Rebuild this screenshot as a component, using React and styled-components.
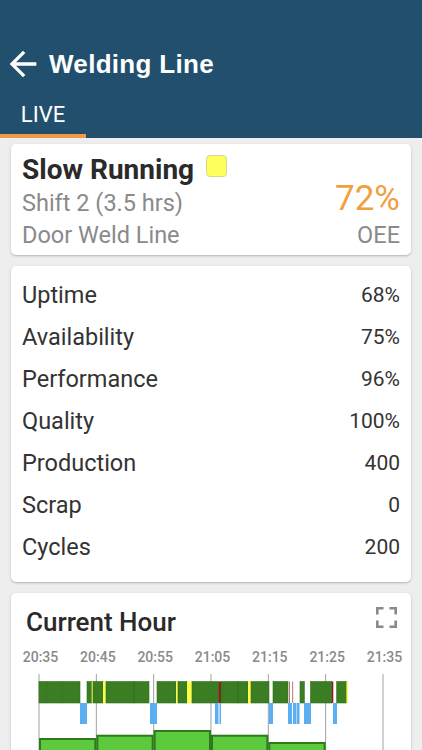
import React from "react";
import styled, { createGlobalStyle } from "styled-components";

const GlobalStyle = createGlobalStyle`
  html, body { margin: 0; padding: 0; background: #eeeeee; }
  body { font-family: Roboto, "Noto Sans", sans-serif; }
  * { box-sizing: border-box; }
`;

const Screen = styled.div`
  width: 422px;
  height: 750px;
  overflow: hidden;
  background: #eeeeee;
`;

const Header = styled.header`
  background: #224f6e;
  padding-top: 36px;
  color: #fff;
`;

const TitleRow = styled.div`
  height: 56px;
  display: flex;
  align-items: center;
  padding-left: 8px;
  gap: 11px;
`;

const Title = styled.h1`
  margin: 0;
  font-family: "Liberation Sans", Arial, sans-serif;
  font-weight: 700;
  font-size: 26px;
  letter-spacing: 0.3px;
`;

const Tabs = styled.div`
  display: flex;
  height: 46px;
`;

const Tab = styled.div`
  width: 86px;
  display: flex;
  align-items: center;
  justify-content: center;
  font-size: 22px;
  padding-top: 3px;
  border-bottom: 4px solid ${(p) => (p.$active ? "#f0994a" : "transparent")};
`;

const Content = styled.main`
  display: flex;
  flex-direction: column;
  gap: 11px;
  padding: 6px 11px 0;
`;

const Card = styled.section`
  background: #fff;
  border-radius: 5px;
  box-shadow: 0 1px 3px rgba(0, 0, 0, 0.18), 0 1px 1px rgba(0, 0, 0, 0.08);
`;

const StatusCard = styled(Card)`
  display: flex;
  justify-content: space-between;
  padding: 9px 11px 4px;
`;

const StatusInfo = styled.div`
  display: flex;
  flex-direction: column;
`;

const StatusTitle = styled.div`
  display: flex;
  align-items: flex-start;
  gap: 12px;
  font-size: 28px;
  font-weight: 700;
  line-height: 34px;
  color: #2a2a2a;
`;

const StateSwatch = styled.span`
  width: 21px;
  height: 22px;
  margin-top: 2px;
  border-radius: 4px;
  background: ${(p) => p.$color};
  border: 1px solid #d9d78c;
`;

const Muted = styled.div`
  font-size: 23.5px;
  line-height: 32px;
  color: #8a8a8a;
  text-align: ${(p) => (p.$right ? "right" : "left")};
`;

const OeeBox = styled.div`
  display: flex;
  flex-direction: column;
  justify-content: flex-end;
  align-items: flex-end;
`;

const OeeValue = styled.div`
  font-size: 35px;
  line-height: 40px;
  color: #f0a040;
`;

const StatsCard = styled(Card)`
  padding: 8px 11px 14px;
`;

const StatRow = styled.div`
  display: flex;
  justify-content: space-between;
  font-size: 23.5px;
  line-height: 42px;
  color: #333;
`;

const StatValue = styled.span`
  font-size: 21px;
`;

const ChartCard = styled(Card)`
  padding-top: 14px;
`;

const ChartHeader = styled.div`
  display: flex;
  justify-content: space-between;
  align-items: flex-start;
  padding: 0 14px 0 15px;
`;

const ChartTitle = styled.h2`
  margin: 0;
  font-size: 26px;
  line-height: 31px;
  font-weight: 500;
  color: #2a2a2a;
`;

const ChartSvg = styled.svg`
  display: block;
`;

const BackArrow = () => (
  <svg width="30" height="30" viewBox="3 3 18 18">
    <path
      d="M20 11H7.83l5.59-5.59L12 4l-8 8 8 8 1.41-1.41L7.83 13H20v-2z"
      fill="#fff"
    />
  </svg>
);

const FullscreenIcon = () => (
  <svg width="21" height="21" viewBox="0 0 21 21" fill="none" stroke="#8a8a8a" strokeWidth="2.6">
    <path d="M1.3 7.5V1.3h6.2M13.5 1.3h6.2v6.2M19.7 13.5v6.2h-6.2M7.5 19.7H1.3v-6.2" />
  </svg>
);

const stats = [
  ["Uptime", "68%"],
  ["Availability", "75%"],
  ["Performance", "96%"],
  ["Quality", "100%"],
  ["Production", "400"],
  ["Scrap", "0"],
  ["Cycles", "200"],
];

const labels = ["20:35", "20:45", "20:55", "21:05", "21:15", "21:25", "21:35"];
const gridX = labels.map((_, i) => 39 + i * 57.33);

const G = "#3a7d22";
const Y = "#fcfc4a";
const R = "#8b1c14";

const band = [
  [39, 46.7, G], [46.7, 62.3, G], [62.3, 80, G],
  [87, 91.7, G], [91.7, 93, Y], [93, 103, G], [103, 106, Y], [106, 134, G], [134, 149, G],
  [157, 176, G], [176, 178, Y], [178, 187, G], [187, 192, Y], [192, 218.5, G], [218.5, 221, R],
  [221, 238, G], [238, 248, G], [248, 251, Y], [251, 269, G],
  [273, 288, G], [289, 289.6, R], [292.5, 293.1, R], [300, 304.3, G],
  [310.5, 331.7, G], [331.7, 333.3, R], [336.7, 346.5, G], [346.5, 348, Y],
];

const blue = [
  [80, 87], [150, 157], [215, 218.5], [219.5, 221], [269, 273],
  [288, 292], [293, 296], [296.5, 299.5], [304, 311], [333, 337],
];

const hours = [739, 735.7, 731, 735.7, 743];

const TimelineChart = () => (
  <ChartSvg width="400" height="130" viewBox="11 638 400 130">
    {labels.map((l, i) => (
      <text
        key={l}
        x={gridX[i] + 1.5}
        y={662}
        textAnchor="middle"
        fontFamily="Roboto, sans-serif"
        fontSize="14"
        fontWeight="500"
        fill="#8a8a8a"
      >
        {l}
      </text>
    ))}
    {gridX.map((x) => (
      <line key={x} x1={x} x2={x} y1={674} y2={767} stroke="#a0a0a0" strokeWidth="1" />
    ))}
    {band.map(([a, b, c], i) => (
      <rect
        key={i}
        x={a}
        y={681.5}
        width={b - a}
        height={21.5}
        fill={c}
        stroke={c === G ? "#336f1e" : "none"}
        strokeWidth="0.6"
      />
    ))}
    {blue.map(([a, b], i) => (
      <rect key={i} x={a} y={703} width={b - a} height={21} fill="#5aaff2" />
    ))}
    {hours.map((top, i) => (
      <rect
        key={i}
        x={gridX[i] + 1}
        y={top}
        width={57.33 - 2}
        height={767 - top}
        fill="#5dc93c"
        stroke="#2f7a1c"
        strokeWidth="2"
      />
    ))}
  </ChartSvg>
);

export default function App() {
  return (
    <Screen>
      <GlobalStyle />
      <Header>
        <TitleRow>
          <BackArrow />
          <Title>Welding Line</Title>
        </TitleRow>
        <Tabs>
          <Tab $active>LIVE</Tab>
        </Tabs>
      </Header>
      <Content>
        <StatusCard>
          <StatusInfo>
            <StatusTitle>
              Slow Running
              <StateSwatch $color="#ffff5e" />
            </StatusTitle>
            <Muted>Shift 2 (3.5 hrs)</Muted>
            <Muted>Door Weld Line</Muted>
          </StatusInfo>
          <OeeBox>
            <OeeValue>72%</OeeValue>
            <Muted $right>OEE</Muted>
          </OeeBox>
        </StatusCard>
        <StatsCard>
          {stats.map(([k, v]) => (
            <StatRow key={k}>
              <span>{k}</span>
              <StatValue>{v}</StatValue>
            </StatRow>
          ))}
        </StatsCard>
        <ChartCard>
          <ChartHeader>
            <ChartTitle>Current Hour</ChartTitle>
            <FullscreenIcon />
          </ChartHeader>
          <TimelineChart />
        </ChartCard>
      </Content>
    </Screen>
  );
}
